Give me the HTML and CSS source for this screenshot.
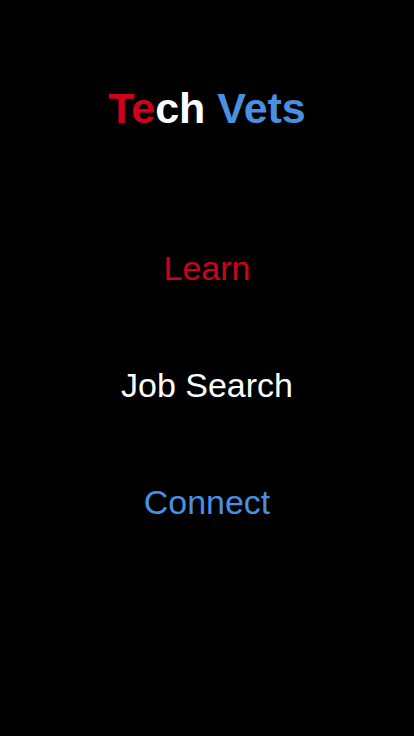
FILE: index.html
```html
<!DOCTYPE html>
<html lang="en">
<head>
<meta charset="utf-8">
<title>Tech Vets</title>
<link rel="stylesheet" href="styles.css">
</head>
<body>
<main class="screen">
  <h1 class="title"><span class="red">Te</span><span class="white">ch</span> <span class="blue">Vets</span></h1>
  <nav class="menu">
    <a class="item red" href="#">Learn</a>
    <a class="item white" href="#">Job Search</a>
    <a class="item blue" href="#">Connect</a>
  </nav>
</main>
</body>
</html>
```
FILE: styles.css
```css
html, body {
  margin: 0;
  padding: 0;
  background: #000;
  height: 100%;
}
.screen {
  display: flex;
  flex-direction: column;
  align-items: center;
  font-family: "Liberation Sans", Arial, sans-serif;
  min-height: 736px;
  padding-top: 86px;
  box-sizing: border-box;
}
.title {
  margin: 0;
  font-size: 43px;
  line-height: 44px;
  font-weight: bold;
  letter-spacing: 0;
}
.menu {
  display: flex;
  flex-direction: column;
  align-items: center;
  gap: 77px;
  margin-top: 118px;
}
.item {
  display: block;
  font-size: 34px;
  line-height: 40px;
  text-decoration: none;
}
.red { color: #d0021b; }
.white { color: #fff; }
.blue { color: #4a90e2; }
```
